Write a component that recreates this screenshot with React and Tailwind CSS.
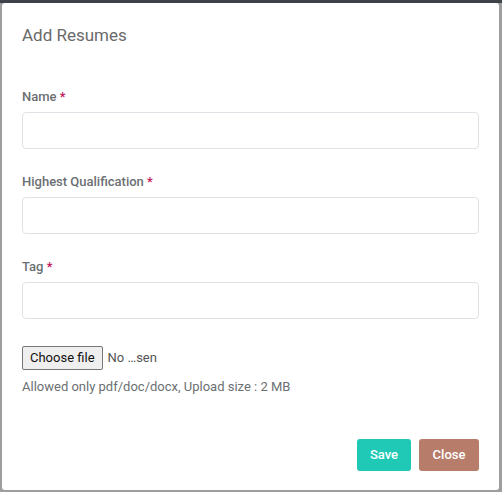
import React from 'react'

function Field({ label }) {
  return (
    <div className="mb-[24px]">
      <label className="block text-[13px] leading-[18px] font-medium text-[#6b6f73] mb-[6px]">
        {label} <span className="text-[#c2185b]">*</span>
      </label>
      <input
        type="text"
        className="block w-full h-[37px] rounded-[4px] border border-[#dfe2e6] bg-white px-3 text-[13px] outline-none"
      />
    </div>
  )
}

function App() {
  return (
    <div
      className="w-[502px] h-[492px] bg-[#9c9ea0] flex flex-col"
      style={{ fontFamily: 'Roboto, "Liberation Sans", sans-serif' }}
    >
      <div className="h-[3px] bg-[#3d4349]" />
      <div className="flex-1 pl-[2px] pr-[3px] pb-[2px]">
        <div className="h-full bg-white rounded-[3px] px-[20px] pt-[20px] flex flex-col">
          <h2 className="text-[17px] leading-[24px] text-[#6a6a6a] font-normal">Add Resumes</h2>

          <div className="mt-[41px] flex flex-col">
            <Field label="Name" />
            <Field label="Highest Qualification" />
            <Field label="Tag" />

            <div className="mt-[3px] flex items-center h-[24px]">
              <button className="h-[24px] px-[7px] text-[13px] text-[#111] bg-[#efefef] border border-[#767676] rounded-[2px]">
                Choose file
              </button>
              <span className="ml-[5px] text-[13px] text-[#555]">No …sen</span>
            </div>
            <p className="mt-[8px] text-[13px] leading-[18px] text-[#6b6f73]">
              Allowed only pdf/doc/docx, Upload size : 2 MB
            </p>
          </div>

          <div className="mt-auto mb-[19px] flex justify-end gap-[8px]">
            <button className="h-[32px] w-[54px] rounded-[3px] bg-[#1fc9b6] text-white text-[13px] font-medium">
              Save
            </button>
            <button className="h-[32px] w-[60px] rounded-[3px] bg-[#b77c6a] text-white text-[13px] font-medium">
              Close
            </button>
          </div>
        </div>
      </div>
    </div>
  )
}

export default App
